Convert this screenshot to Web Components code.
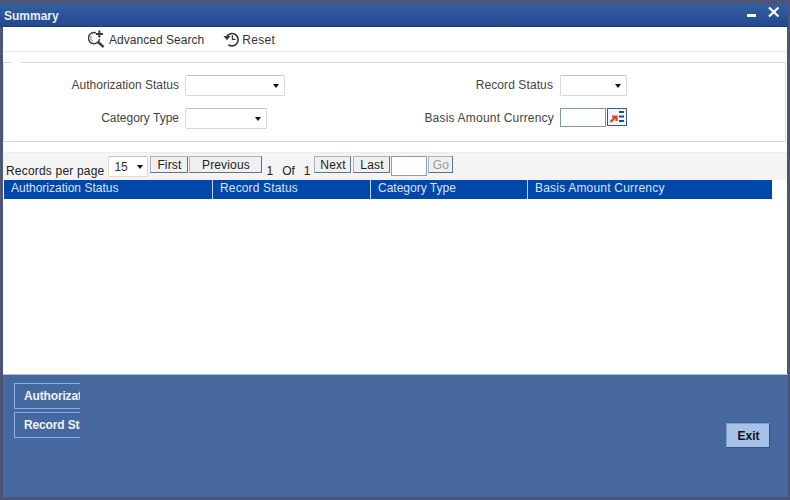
<!DOCTYPE html>
<html>
<head>
<meta charset="utf-8">
<title>Summary</title>
<style>
  html, body { margin: 0; padding: 0; background: #4c5578; }
  body { width: 790px; height: 500px; overflow: hidden; font: 12px "Liberation Sans", Arial, sans-serif; color: #333; }
</style>
</head>
<body>
<fc-window>
  <fc-titlebar slot="title">Summary</fc-titlebar>
  <fc-toolbar></fc-toolbar>
  <fc-search-form></fc-search-form>
  <fc-pager></fc-pager>
  <fc-grid></fc-grid>
  <fc-footer slot="footer"></fc-footer>
</fc-window>

<script>
class FcWindow extends HTMLElement {
    constructor() {
        super();
        this.attachShadow({ mode: "open" });
        this.shadowRoot.innerHTML = `
      <style>
        :host { display: flex; flex-direction: column; width: 790px; height: 500px; box-sizing: border-box; padding: 4px 3px 3px 3px; }
        .body { flex: 1; display: flex; flex-direction: column; background: #fff; min-height: 0; }
      </style>
      <slot name="title"></slot>
      <div class="body"><slot></slot></div>
      <slot name="footer"></slot>
    `;
    }
}

class FcTitlebar extends HTMLElement {
    constructor() {
        super();
        this.attachShadow({ mode: "open" });
        this.shadowRoot.innerHTML = `
      <style>
        :host { display: flex; align-items: center; box-sizing: border-box; height: 23px; margin-left: -3px; margin-right: -1px;
          background: linear-gradient(#34619f, #2a5298 55%, #234a8c); border-bottom: 1px solid #1d3a6c; color: #e8eef8;
          font-weight: bold; font-size: 12px; }
        .text { padding-left: 4px; padding-top: 1px; flex: 1; }
        svg { display: block; margin-right: 3px; align-self: flex-start; }
      </style>
      <span class="text"><slot></slot></span>
      <svg width="40" height="23" viewBox="0 0 40 23">
        <rect x="2" y="10" width="9" height="3" fill="#fff"/>
        <path d="M24 3.5 L33.5 12.5 M33.5 3.5 L24 12.5" stroke="#fff" stroke-width="2.2" fill="none"/>
      </svg>
    `;
    }
}

class FcToolbar extends HTMLElement {
    constructor() {
        super();
        this.attachShadow({ mode: "open" });
        this.shadowRoot.innerHTML = `
      <style>
        :host { display: flex; align-items: center; height: 24px; padding-left: 85px; border-bottom: 1px solid #e6eaee; color: #333; }
        .item { display: flex; align-items: center; gap: 3px; }
        .item span { padding-top: 1px; }
        .adv span { letter-spacing: 0.04px; }
        .reset { margin-left: 19px; gap: 2px; }
        .reset span { letter-spacing: 0.3px; }
        svg { display: block; }
      </style>
      <span class="item adv">
        <svg width="18" height="18" viewBox="0 0 18 18" fill="none" stroke="#3c3c3c">
          <path d="M7.8 2.8 A5.6 5.6 0 1 0 11.6 9" stroke-width="1.5"/>
          <path d="M3.2 6 A3.6 3.6 0 0 0 4.6 11.2" stroke="#9a9a9a" stroke-width="1.3"/>
          <path d="M10 12 L15.6 17" stroke-width="2.4"/>
          <path d="M11.4 0.4 V7.6 M7.8 4 H15" stroke-width="2"/>
        </svg>
        <span>Advanced Search</span>
      </span>
      <span class="item reset">
        <svg width="17" height="18" viewBox="0 0 17 18" fill="none" stroke="#3c3c3c">
          <path d="M4 6 A6.2 6.2 0 1 1 5.4 14.8" stroke-width="1.7"/>
          <path d="M9.4 5.2 V9.4 H12.6" stroke-width="1.3"/>
          <path d="M0.4 6 H7.6 L4 10.2 Z" fill="#3c3c3c" stroke="none"/>
        </svg>
        <span>Reset</span>
      </span>
    `;
    }
}

class FcSelect extends HTMLElement {
    constructor() {
        super();
        this.attachShadow({ mode: "open" });
        this.shadowRoot.innerHTML = `
      <style>
        :host { display: inline-flex; align-items: center; justify-content: flex-end; box-sizing: border-box; height: 21px;
          background: #fff; border: 1px solid #d9d9d9; border-top-color: #c4c4c4; border-radius: 2px; padding: 0 5px; }
        i { display: block; width: 0; height: 0; border: 3.5px solid transparent; border-top: 4px solid #111; border-bottom: 0; margin-top: 1px; }
      </style>
      <slot></slot><i></i>
    `;
    }
}

class FcSearchForm extends HTMLElement {
    constructor() {
        super();
        this.attachShadow({ mode: "open" });
        this.shadowRoot.innerHTML = `
      <style>
        :host { display: grid; grid-template-columns: 175px 100px 1fr; box-sizing: border-box; position: relative;
          height: 80px; margin-top: 10px; margin-right: 1px; padding-top: 12px;
          border: 1px solid #cfdbe6;
          grid-template-rows: 21px 21px; row-gap: 12px; align-content: start; color: #444; }
        /* the legend's gap in the top rule */
        .gap { position: absolute; left: 8px; top: -1px; width: 8px; height: 1px; background: #fff; }
        .lbl { text-align: right; line-height: 20px; }
        .c2 { padding-left: 6px; }
        .right { display: grid; grid-template-columns: 368px auto; column-gap: 7px; justify-content: start; margin-left: -94px; }
        .rec { letter-spacing: 0.1px; }
        .basis { letter-spacing: 0.2px; margin-right: -1px; }
        .pick { display: flex; align-items: flex-start; gap: 1px; }
        .pick input { box-sizing: border-box; width: 46px; height: 19px; margin: 0; border: 1px solid #7c98ae; padding: 0; background: #fff; }
        .lov { display: block; box-sizing: border-box; width: 20px; height: 18px; border: 1px solid #3c5a7c; background: #f2f4f8; }
        fc-select.a { width: 100px; }
        fc-select.b { width: 82px; }
        fc-select.c { width: 67px; }
      </style>
      <span class="gap"></span>
      <div class="lbl">Authorization Status</div>
      <div class="c2"><fc-select class="a"></fc-select></div>
      <div class="right"><div class="lbl rec">Record Status</div><fc-select class="c"></fc-select></div>
      <div class="lbl">Category Type</div>
      <div class="c2"><fc-select class="b"></fc-select></div>
      <div class="right"><div class="lbl basis">Basis Amount Currency</div>
        <div class="pick"><input type="text">
          <svg class="lov" viewBox="0 0 18 16">
            <path d="M2.5 13 L7 8.5 M4 7.5 H8.5 V12" stroke="#d8401c" stroke-width="2.2" fill="none"/>
            <path d="M11 3 H16 M11 7.5 H16 M11 12 H16" stroke="#1c4f8c" stroke-width="2"/>
          </svg>
        </div>
      </div>
    `;
    }
}

class FcPager extends HTMLElement {
    constructor() {
        super();
        this.attachShadow({ mode: "open" });
        this.shadowRoot.innerHTML = `
      <style>
        :host { display: flex; align-items: flex-start; box-sizing: border-box; height: 28px; margin-top: 10px; padding: 3px 0 0 3px;
          background: #f4f4f4; border-top: 1px solid #ececec; color: #222; font-size: 12px; white-space: nowrap; }
        .rpp { margin-top: 8px; letter-spacing: 0.19px; }
        fc-select { margin-left: 4px; width: 40px; height: 21px; justify-content: space-between; padding: 0 4px 0 5px; color: #333; }
        button { box-sizing: border-box; height: 17px; margin: 0; padding: 0; font: inherit; letter-spacing: 0.15px; color: #222; background: #f0f0f0;
          border: 1px solid #7f8c9a; border-color: #a8b4c0 #5f7286 #5f7286 #a8b4c0; }
        .first { width: 38px; margin-left: 2px; }
        .prev { width: 73px; margin-left: 1px; }
        .n { margin-top: 8px; }
        .next { width: 37px; }
        .last { width: 37px; margin-left: 2px; }
        input { box-sizing: border-box; width: 36px; height: 20px; margin: 0 0 0 1px; border: 1px solid #8aa0b4; background: #fff; padding: 0; }
        .go { width: 25px; margin-left: 1px; color: #999; }
      </style>
      <span class="rpp">Records per page</span>
      <fc-select>15</fc-select>
      <button class="first">First</button>
      <button class="prev">Previous</button>
      <span class="n" style="margin-left:4px">1</span>
      <span class="n" style="margin-left:9px">Of</span>
      <span class="n" style="margin-left:9px;margin-right:4px">1</span>
      <button class="next">Next</button>
      <button class="last">Last</button>
      <input type="text">
      <button class="go">Go</button>
    `;
    }
}

class FcGrid extends HTMLElement {
    constructor() {
        super();
        this.attachShadow({ mode: "open" });
        const cols = [
            ["Authorization Status", 209, 0],
            ["Record Status", 158, 0.15],
            ["Category Type", 157, 0],
            ["Basis Amount Currency", 244, 0.2]
        ];
        this.shadowRoot.innerHTML = `
      <style>
        :host { display: block; flex: 1; padding-left: 1px; background: #fff; }
        .head { display: flex; width: 768px; height: 19px; background: #0047ab; color: #d8e4f4; line-height: 16px; }
        .head div { box-sizing: border-box; padding-left: 7px; border-right: 1px solid #c4d4e8; }
        .head div:last-child { border-right: 0; }
      </style>
      <div class="head">
        ${cols.map(([t, w, ls]) => `<div style="width:${w}px;letter-spacing:${ls}px">${t}</div>`).join("")}
      </div>
    `;
    }
}

class FcFooter extends HTMLElement {
    constructor() {
        super();
        this.attachShadow({ mode: "open" });
        this.shadowRoot.innerHTML = `
      <style>
        :host { display: flex; justify-content: space-between; align-items: flex-start; box-sizing: border-box; height: 123px;
          border-top: 1px solid #b4c4d8; background: #47689f; padding: 8px 18px 0 11px; margin-right: -1px; }
        .stack { display: flex; flex-direction: column; gap: 3px; }
        .tab { box-sizing: border-box; width: 66px; height: 26px; overflow: hidden; white-space: nowrap; padding-left: 9px; line-height: 25px;
          border: 1px solid #80b2f0; border-right: 0; color: #eef3fa; font-weight: bold; letter-spacing: -0.15px; }
        .exit { box-sizing: border-box; width: 44px; height: 25px; margin-top: 40px; padding: 0 0 0 1px; font: bold 12px "Liberation Sans", Arial, sans-serif; color: #111;
          background: #a6c2e8; border: 1px solid #7f9fca; border-right-color: #35507c; border-bottom-color: #35507c; }
      </style>
      <div class="stack">
        <div class="tab">Authorization Status</div>
        <div class="tab">Record Status</div>
      </div>
      <button class="exit">Exit</button>
    `;
    }
}

customElements.define("fc-window", FcWindow);
customElements.define("fc-titlebar", FcTitlebar);
customElements.define("fc-toolbar", FcToolbar);
customElements.define("fc-select", FcSelect);
customElements.define("fc-search-form", FcSearchForm);
customElements.define("fc-pager", FcPager);
customElements.define("fc-grid", FcGrid);
customElements.define("fc-footer", FcFooter);
</script>
</body>
</html>
